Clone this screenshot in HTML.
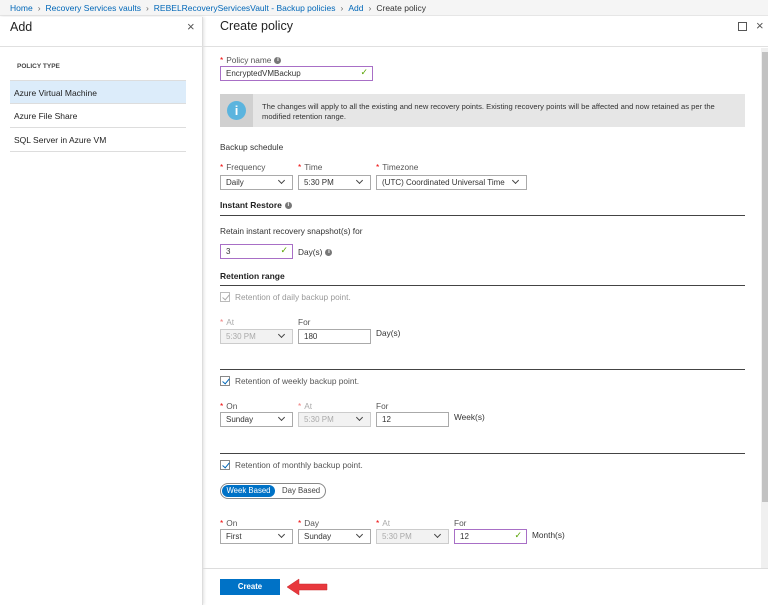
<!DOCTYPE html>
<html><head><meta charset="utf-8"><style>
*{margin:0;padding:0;box-sizing:border-box}
body{width:768px;height:605px;overflow:hidden;background:#fff;font-family:"Liberation Sans",sans-serif;color:#333;position:relative;font-size:8.5px}
.a{position:absolute;white-space:nowrap}
.bc{left:0;top:0;width:768px;height:16px;background:#f5f5f5;border-bottom:1px solid #e6e6e6;font-size:8.5px;color:#0067b8;padding:3px 0 0 10px}
.bc span{color:#666;margin:0 5px}
.inp{position:absolute;height:15px;border:1px solid #aaa;background:#fff;font-size:8px;padding:2px 5px;color:#333}
.sel::after{content:"";position:absolute;right:8px;top:2px;width:4px;height:4px;border-right:1px solid #444;border-bottom:1px solid #444;transform:rotate(45deg)}
.dis{background:#f2f2f2;color:#aaa;border-color:#ccc}
.ok{border-color:#a86fc6}
.ok::after{content:"✓";position:absolute;right:4px;top:0;color:#57a300;font-size:9px}
.lbl{position:absolute;font-size:8.3px;color:#555}
.lbl b{color:#e00;font-weight:normal;margin-right:3px}
.h{position:absolute;font-size:8.5px;font-weight:bold;color:#222}
.ln{position:absolute;left:220px;width:525px;height:1px;background:#444}
.cb{position:absolute;width:10px;height:10px;border:1px solid #888;background:#fff}
.cb::after{content:"";position:absolute;left:3px;top:0px;width:3px;height:6px;border-right:1.5px solid #0067b8;border-bottom:1.5px solid #0067b8;transform:rotate(40deg)}
.cb.d::after{border-color:#aaa}
.i{display:inline-block;width:7px;height:7px;border-radius:50%;background:#777;color:#fff;font-size:6px;line-height:7px;text-align:center;font-weight:bold;vertical-align:middle;margin-left:3px}
</style></head><body>
<div class="a bc">Home<span>›</span>Recovery Services vaults<span>›</span>REBELRecoveryServicesVault - Backup policies<span>›</span>Add<span>›</span><i style="font-style:normal;color:#333">Create policy</i></div>
<div class="a" style="left:0;top:17px;width:203px;height:588px;background:#fff;border-right:1px solid #ddd;box-shadow:1px 0 3px rgba(0,0,0,.12)"></div>
<div class="a" style="left:10px;top:20px;font-size:12.5px;color:#222">Add</div>
<div class="a" style="left:187px;top:19px;font-size:13px;color:#555">×</div>
<div class="a" style="left:0;top:46px;width:203px;height:1px;background:#e0e0e0"></div>
<div class="a" style="left:17px;top:63px;font-size:6.5px;font-weight:bold;color:#444">POLICY TYPE</div>
<div class="a" style="left:10px;top:80px;width:176px;height:24px;background:#dcecfa;border-top:1px solid #ddd;border-bottom:1px solid #ddd;padding:7px 4px;font-size:8.5px;color:#222">Azure Virtual Machine</div>
<div class="a" style="left:10px;top:104px;width:176px;height:24px;border-bottom:1px solid #ddd;padding:7px 4px;font-size:8.5px;color:#222">Azure File Share</div>
<div class="a" style="left:10px;top:128px;width:176px;height:24px;border-bottom:1px solid #ddd;padding:7px 4px;font-size:8.5px;color:#222">SQL Server in Azure VM</div>

<div class="a" style="left:220px;top:19px;font-size:12.5px;color:#222">Create policy</div>
<div class="a" style="left:738px;top:22px;width:9px;height:9px;border:1px solid #555"></div>
<div class="a" style="left:756px;top:18px;font-size:13px;color:#555">×</div>
<div class="a" style="left:203px;top:46px;width:565px;height:1px;background:#e0e0e0"></div>
<div class="a" style="left:761px;top:48px;width:7px;height:520px;background:#f0f0f0"></div>
<div class="a" style="left:762px;top:52px;width:6px;height:450px;background:#c2c2c2"></div>

<div class="lbl" style="left:220px;top:55px"><b>*</b>Policy name<span class="i">i</span></div>
<div class="inp ok" style="left:220px;top:66px;width:153px">EncryptedVMBackup</div>
<div class="a" style="left:220px;top:94px;width:525px;height:33px;background:#e6e6e6"></div>
<div class="a" style="left:220px;top:94px;width:33px;height:33px;background:#d0d0d0"></div>
<div class="a" style="left:227px;top:101px;width:19px;height:19px;border-radius:50%;background:#5bb4de;color:#fff;font-size:13px;text-align:center;line-height:19px;font-weight:bold">i</div>
<div class="a" style="left:262px;top:102px;font-size:7.6px;color:#333;line-height:10px">The changes will apply to all the existing and new recovery points. Existing recovery points will be affected and now retained as per the<br>modified retention range.</div>

<div class="lbl" style="left:220px;top:142px;color:#333">Backup schedule</div>
<div class="lbl" style="left:220px;top:162px"><b>*</b>Frequency</div>
<div class="lbl" style="left:298px;top:162px"><b>*</b>Time</div>
<div class="lbl" style="left:376px;top:162px"><b>*</b>Timezone</div>
<div class="inp sel" style="left:220px;top:175px;width:73px">Daily</div>
<div class="inp sel" style="left:298px;top:175px;width:73px">5:30 PM</div>
<div class="inp sel" style="left:376px;top:175px;width:151px">(UTC) Coordinated Universal Time</div>

<div class="h" style="left:220px;top:200px">Instant Restore<span class="i">i</span></div>
<div class="ln" style="top:215px"></div>
<div class="lbl" style="left:220px;top:226px;color:#333">Retain instant recovery snapshot(s) for</div>
<div class="inp ok" style="left:220px;top:244px;width:73px">3</div>
<div class="lbl" style="left:298px;top:247px;color:#333">Day(s)<span class="i">i</span></div>

<div class="h" style="left:220px;top:271px">Retention range</div>
<div class="ln" style="top:285px"></div>
<div class="cb d" style="left:220px;top:292px;border-color:#bbb"></div>
<div class="lbl" style="left:235px;top:292px;color:#999">Retention of daily backup point.</div>
<div class="lbl" style="left:220px;top:317px;color:#aaa"><b style="color:#f08080">*</b>At</div>
<div class="lbl" style="left:298px;top:317px">For</div>
<div class="inp sel dis" style="left:220px;top:329px;width:73px">5:30 PM</div>
<div class="inp" style="left:298px;top:329px;width:73px">180</div>
<div class="lbl" style="left:376px;top:328px;color:#333">Day(s)</div>

<div class="ln" style="top:369px"></div>
<div class="cb" style="left:220px;top:376px"></div>
<div class="lbl" style="left:235px;top:376px">Retention of weekly backup point.</div>
<div class="lbl" style="left:220px;top:401px"><b>*</b>On</div>
<div class="lbl" style="left:298px;top:401px;color:#aaa"><b style="color:#f08080">*</b>At</div>
<div class="lbl" style="left:376px;top:401px">For</div>
<div class="inp sel" style="left:220px;top:412px;width:73px">Sunday</div>
<div class="inp sel dis" style="left:298px;top:412px;width:73px">5:30 PM</div>
<div class="inp" style="left:376px;top:412px;width:73px">12</div>
<div class="lbl" style="left:454px;top:412px;color:#333">Week(s)</div>

<div class="ln" style="top:453px"></div>
<div class="cb" style="left:220px;top:460px"></div>
<div class="lbl" style="left:235px;top:460px">Retention of monthly backup point.</div>
<div class="a" style="left:220px;top:483px;width:106px;height:16px;border:1px solid #888;border-radius:8px"></div>
<div class="a" style="left:222px;top:485px;width:53px;height:12px;border-radius:6px;background:#0072c6;color:#fff;font-size:7.8px;text-align:center;line-height:12px">Week Based</div>
<div class="a" style="left:282px;top:486px;font-size:7.8px;color:#444">Day Based</div>

<div class="lbl" style="left:220px;top:518px"><b>*</b>On</div>
<div class="lbl" style="left:298px;top:518px"><b>*</b>Day</div>
<div class="lbl" style="left:376px;top:518px;color:#aaa"><b>*</b>At</div>
<div class="lbl" style="left:454px;top:518px">For</div>
<div class="inp sel" style="left:220px;top:529px;width:73px">First</div>
<div class="inp sel" style="left:298px;top:529px;width:73px">Sunday</div>
<div class="inp sel dis" style="left:376px;top:529px;width:73px">5:30 PM</div>
<div class="inp ok" style="left:454px;top:529px;width:73px">12</div>
<div class="lbl" style="left:532px;top:530px;color:#333">Month(s)</div>

<div class="a" style="left:203px;top:568px;width:565px;height:1px;background:#ddd"></div>
<div class="a" style="left:220px;top:579px;width:60px;height:16px;background:#0072c6;color:#fff;font-size:7.8px;font-weight:bold;text-align:center;line-height:16px">Create</div>
<svg class="a" style="left:285px;top:578px" width="45" height="18" viewBox="0 0 45 18"><path d="M2 9 L14 1 L14 6 L42 6 L42 12 L14 12 L14 17 Z" fill="#e8383d" stroke="#c92a2f" stroke-width=".5"/></svg>
</body></html>
